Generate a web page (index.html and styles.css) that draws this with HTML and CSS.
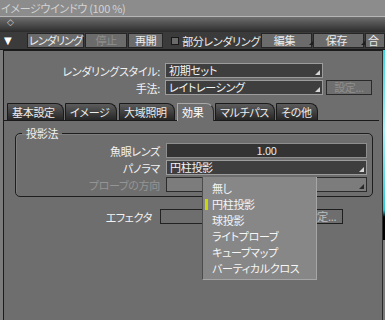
FILE: index.html
```html
<!DOCTYPE html>
<html>
<head>
<title>イメージウインドウ</title>
<link rel="stylesheet" href="styles.css">
</head>
<body>

<div id="titlebar">イメージウインドウ (100 %)</div>
<div id="grip">◇</div>

<div id="toolbar">
  <span class="collapse">▼</span>
  <button class="tb-btn w-render">レンダリング</button>
  <button class="tb-btn w-stop disabled">停止</button>
  <button class="tb-btn w-resume">再開</button>
  <label class="tb-check"><span class="box"></span>部分レンダリング</label>
  <button class="tb-btn menu-btn">編集<span class="corner"></span></button>
  <button class="tb-btn menu-btn">保存<span class="corner"></span></button>
  <button class="tb-btn cut">合</button>
</div>

<div id="main">
  <div id="panel">
    <div class="row">
      <span class="lbl">レンダリングスタイル:</span>
      <div class="select top-select">初期セット<span class="arrow"></span></div>
    </div>
    <div class="row">
      <span class="lbl">手法:</span>
      <div class="select top-select">レイトレーシング<span class="arrow"></span></div>
      <button class="btn disabled">設定...</button>
    </div>

    <div id="tabs">
      <div class="tab tab-basic">基本設定</div>
      <div class="tab tab-image">イメージ</div>
      <div class="tab tab-gi">大域照明</div>
      <div class="tab tab-fx active">効果</div>
      <div class="tab tab-multi">マルチパス</div>
      <div class="tab tab-other">その他</div>
    </div>

    <fieldset class="group">
      <legend>投影法</legend>
      <div class="row">
        <span class="lbl">魚眼レンズ</span>
        <div class="field">1.00</div>
      </div>
      <div class="row">
        <span class="lbl">パノラマ</span>
        <div class="select wide">円柱投影<span class="arrow"></span></div>
      </div>
      <div class="row">
        <span class="lbl disabled">プローブの方向</span>
        <div class="select wide off"><span></span><span class="arrow"></span></div>
      </div>
    </fieldset>

    <div class="row effector">
      <span class="lbl">エフェクタ</span>
      <div class="select eff-select"><span></span><span class="arrow"></span></div>
      <button class="btn eff-btn">設定...</button>
    </div>
  </div>
  <div id="edge"></div>
</div>

<div id="popup">
  <div class="item">無し</div>
  <div class="item current">円柱投影</div>
  <div class="item">球投影</div>
  <div class="item">ライトプローブ</div>
  <div class="item">キューブマップ</div>
  <div class="item">バーティカルクロス</div>
</div>

</body>
</html>
```

FILE: styles.css
```css
* { box-sizing: border-box; }
body { margin: 0; width: 385px; height: 320px; overflow: hidden; background-color: #6e6e6e; color: #f0f0f0; font-family: "Noto Sans CJK JP", "Liberation Sans", sans-serif; font-size: 11px; letter-spacing: -0.3px; font-feature-settings: "palt"; }
button { font: inherit; color: inherit; letter-spacing: inherit; margin: 0; }

#titlebar { height: 17px; line-height: 16px; padding-left: 1px; background-color: #8c8c8c; color: #d2d2d2; border-bottom: 1px solid #b6b6b6; white-space: nowrap; }
#grip { height: 15px; padding-left: 7px; background: linear-gradient(#6e6e6e, #2c2c2c); color: #d0d0d0; font-family: "DejaVu Sans", sans-serif; font-size: 9px; line-height: 10px; }

/* toolbar */
#toolbar { display: flex; align-items: center; height: 18px; background-color: #3b3b3b; border-bottom: 1px solid #1a1a1a; white-space: nowrap; overflow: hidden; }
.collapse { width: 32px; padding-left: 4px; color: #fff; font-family: "DejaVu Sans", sans-serif; font-size: 10px; }
.tb-btn { height: 15px; padding: 0; line-height: 13px; background-color: #6b6b6b; border: 1px solid #262626; color: #ececec; flex: none; }
.tb-btn.disabled { color: #8e8e8e; }
.w-render { width: 57px; letter-spacing: -0.8px; }
.w-stop { width: 42px; margin-left: 1px; }
.w-resume { width: 35px; margin-left: 1px; }
.tb-check { display: flex; align-items: center; margin-left: 8px; width: 93px; color: #ececec; }
.tb-check .box { width: 8px; height: 8px; margin-right: 3px; background-color: #6a6a6a; border: 1px solid #181818; }
.menu-btn { width: 51px; margin-left: 1px; display: flex; justify-content: center; align-items: flex-end; }
.menu-btn .corner { width: 0; height: 0; border-left: 4px solid transparent; border-bottom: 4px solid #1e1e1e; margin: 0 -14px 2px 14px; }
.cut { width: 20px; margin-left: 1px; padding-left: 2px; text-align: left; }

/* main panel */
#main { display: flex; height: 270px; background-color: #7c7c7c; padding-left: 3px; }
#panel { flex: 1; background-color: #6e6e6e; border-left: 1px solid #1c1c1c; border-top: 1px solid #1c1c1c; border-right: 1px solid #2a2a2a; padding-top: 12px; }
#edge { width: 2px; background: linear-gradient(#37d3e0 0, #a8f2f8 80px, #2cc6d6 160px, #000 167px, #000 190px, #7a7a7a 190px); }

.row { display: flex; align-items: center; height: 15px; margin-bottom: 2px; white-space: nowrap; }
.lbl { width: 156px; text-align: right; color: #f2f2f2; }
.lbl.disabled { color: #959595; }

.select { display: flex; justify-content: space-between; height: 15px; margin-left: 5px; padding-left: 3px; background-color: #3e3e3e; border: 1px solid #9c9c9c; color: #f4f4f4; line-height: 13px; }
.select .arrow { align-self: flex-end; width: 0; height: 0; border-left: 5px solid transparent; border-bottom: 5px solid #d6d6d6; margin: 0 2px 2px 0; }
.top-select { width: 158px; }
.btn { height: 15px; width: 46px; margin-left: 3px; padding: 0; line-height: 13px; background-color: #6e6e6e; border: 1px solid #2a2a2a; color: #f0f0f0; }
.btn.disabled { color: #8f8f8f; }

/* tabs */
#tabs { display: flex; align-items: flex-end; height: 18px; margin: 8px 3px 0 0; padding-left: 3px; border-bottom: 1px solid #1a1a1a; }
.tab { height: 17px; margin-right: 1px; padding-left: 4px; line-height: 16px; background: linear-gradient(#5c5c5c, #262626); border: 1px solid #1a1a1a; border-bottom: none; border-radius: 1px 8px 0 0; color: #ececec; white-space: nowrap; }
.tab.active { height: 18px; margin-bottom: -1px; background: #6e6e6e; border-color: #a8a8a8 #2a2a2a #6e6e6e #a8a8a8; color: #fff; }
.tab-basic { width: 57px; }
.tab-image { width: 52px; }
.tab-gi { width: 56px; margin-left: 1px; }
.tab-fx { width: 37px; margin-left: 1px; }
.tab-multi { width: 60px; }
.tab-other { width: 42px; }

/* group box */
.group { margin: 6px 9px 0 11px; padding: 4px 5px 4px 0; border: 1px solid #1e1e1e; border-radius: 5px; box-shadow: inset 1px 1px 0 #7e7e7e; min-width: 0; }
.group legend { margin-left: 6px; padding: 0 4px; line-height: 12px; color: #f2f2f2; }
.group .lbl { width: 144px; }
.group .row:last-child { margin-bottom: 0; }
.field { flex: 1; height: 15px; margin-left: 6px; background-color: #333; border: 1px solid #8e8e8e; text-align: center; line-height: 13px; color: #e8e8e8; }
.select.wide { flex: 1; margin-left: 6px; }
.select.off { background-color: #7c7c7c; border-color: #2c2c2c; }
.select.off .arrow { border-bottom-color: #2a2a2a; }

.effector { margin-top: 12px; }
.effector .lbl { width: 148px; }
.eff-select { width: 138px; margin-left: 8px; background-color: #6e6e6e; border-color: #222; }
.eff-btn { width: 43px; margin-left: 2px; border-color: #1e1e1e; color: #bdbdbd; }

/* open dropdown list */
#popup { position: absolute; left: 202px; top: 177px; width: 115px; height: 103px; padding-top: 3px; background-color: #878787; border-left: 1px solid #4c4c4c; border-right: 1px solid #a6a6a6; border-bottom: 1px solid #a6a6a6; }
.item { display: flex; align-items: center; height: 16px; padding-left: 2px; color: #f6f6f6; white-space: nowrap; }
.item::before { content: ""; width: 3px; height: 11px; margin-right: 4px; }
.item.current::before { background-color: #c8d60a; }
```
